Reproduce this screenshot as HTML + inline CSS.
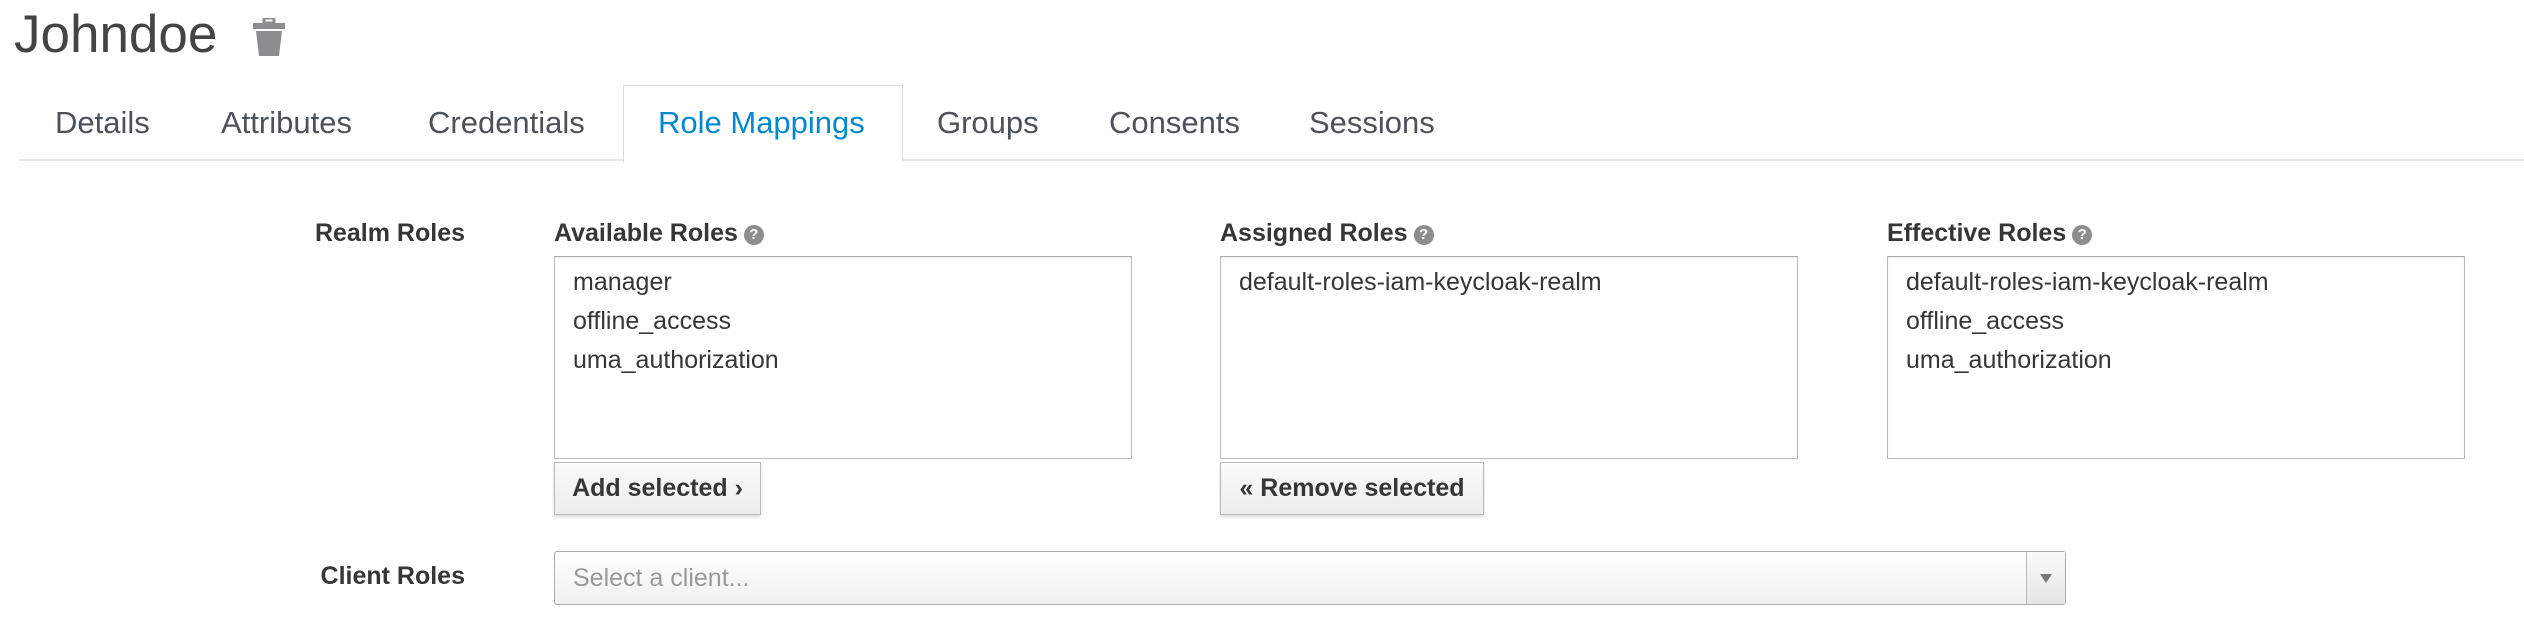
<!DOCTYPE html>
<html><head><meta charset="utf-8"><style>
body{margin:0;width:2524px;height:642px;background:#fff;position:relative;overflow:hidden;font-family:"Liberation Sans",sans-serif;color:#363636}
.a{position:absolute;white-space:nowrap}
.tab{position:absolute;top:104px;font-size:31px;color:#4d5258;line-height:38px}
.lbl{font-size:25px;font-weight:bold;line-height:30px}
.box{position:absolute;top:256px;width:576px;height:201px;border:1px solid #bbb;border-top-color:#aaa;box-shadow:inset 0 1px 1px rgba(0,0,0,.08)}
.box div{position:absolute;left:18px;font-size:25px;line-height:30px}
.btn{position:absolute;top:462px;height:51px;border:1px solid #bbb;background:linear-gradient(#fafafa,#ededed);box-shadow:0 2px 3px rgba(0,0,0,.15);font-size:25px;font-weight:bold;line-height:51px;text-align:center;color:#363636}
.q{display:inline-block;width:20px;height:20px;border-radius:50%;background:#8b8d8f;color:#fff;font-size:15px;line-height:20px;text-align:center;vertical-align:2px;margin-left:6px}
</style></head><body>
<div class="a" style="left:14px;top:2px;font-size:53px;color:#444;line-height:66px">Johndoe</div>
<svg class="a" style="left:252px;top:18px" width="34" height="40" viewBox="0 0 34 40"><rect x="12" y="0" width="10" height="5" fill="none" stroke="#8b8d8f" stroke-width="3"/><rect x="1" y="5" width="32" height="6" fill="#8b8d8f"/><path d="M4 13h26l-3 25H7z" fill="#8b8d8f"/></svg>
<div class="a" style="left:623px;top:85px;width:278px;height:76px;border:1px solid #ddd;border-bottom:none;background:#fff"></div>
<div class="a" style="left:19px;top:159px;width:604px;height:2px;background:#e8e8e8"></div>
<div class="a" style="left:903px;top:159px;width:1621px;height:2px;background:#e8e8e8"></div>
<div class="tab" style="left:55px">Details</div>
<div class="tab" style="left:221px">Attributes</div>
<div class="tab" style="left:428px">Credentials</div>
<div class="tab" style="left:658px;color:#0088ce">Role Mappings</div>
<div class="tab" style="left:937px">Groups</div>
<div class="tab" style="left:1109px">Consents</div>
<div class="tab" style="left:1309px">Sessions</div>
<div class="a lbl" style="right:2059px;top:218px">Realm Roles</div>
<div class="a lbl" style="left:554px;top:218px">Available Roles<span class="q">?</span></div>
<div class="a lbl" style="left:1220px;top:218px">Assigned Roles<span class="q">?</span></div>
<div class="a lbl" style="left:1887px;top:218px">Effective Roles<span class="q">?</span></div>
<div class="box" style="left:554px"><div style="top:10px">manager</div><div style="top:49px">offline_access</div><div style="top:88px">uma_authorization</div></div>
<div class="box" style="left:1220px"><div style="top:10px">default-roles-iam-keycloak-realm</div></div>
<div class="box" style="left:1887px"><div style="top:10px">default-roles-iam-keycloak-realm</div><div style="top:49px">offline_access</div><div style="top:88px">uma_authorization</div></div>
<div class="btn" style="left:554px;width:205px">Add selected ›</div>
<div class="btn" style="left:1220px;width:262px">« Remove selected</div>
<div class="a lbl" style="right:2059px;top:561px">Client Roles</div>
<div class="a" style="left:554px;top:551px;width:1510px;height:52px;border:1px solid #aaa;border-radius:3px;background:linear-gradient(#fff,#f0f0f0)">
<div class="a" style="left:18px;top:10px;font-size:25px;color:#999;line-height:32px">Select a client...</div>
<div class="a" style="right:0;top:0;width:38px;height:52px;border-left:1px solid #bbb;background:linear-gradient(#fafafa,#e6e6e6)"><div class="a" style="left:13px;top:22px;width:0;height:0;border-left:6px solid transparent;border-right:6px solid transparent;border-top:9px solid #777"></div></div>
</div>
</body></html>
